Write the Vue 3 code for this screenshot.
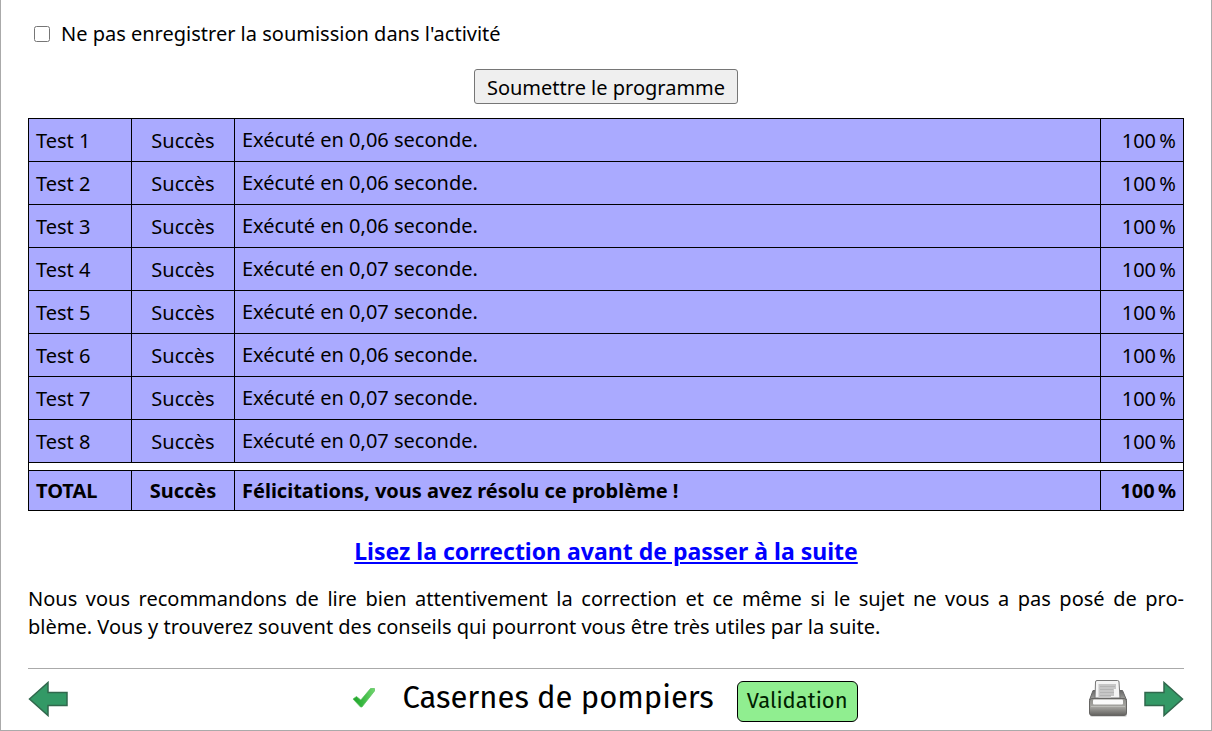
<script setup>
import { ref } from 'vue'

const skipSave = ref(false)
const times = ['0,06', '0,06', '0,06', '0,07', '0,07', '0,06', '0,07', '0,07']
const tests = times.map((time, i) => ({ name: `Test ${i + 1}`, time }))
</script>

<template>
  <main class="page">
    <label class="option">
      <input v-model="skipSave" type="checkbox" />
      <span>Ne pas enregistrer la soumission dans l'activité</span>
    </label>

    <div class="submit">
      <button type="button">Soumettre le programme</button>
    </div>

    <table class="results">
      <colgroup>
        <col class="c-name" />
        <col class="c-state" />
        <col />
        <col class="c-score" />
      </colgroup>
      <tbody>
        <tr v-for="t in tests" :key="t.name">
          <td>{{ t.name }}</td>
          <td class="state">Succès</td>
          <td class="message">Exécuté en {{ t.time }} seconde.</td>
          <td class="score">100&#8239;%</td>
        </tr>
        <tr class="gap"><td colspan="4"></td></tr>
        <tr class="total">
          <td>TOTAL</td>
          <td class="state">Succès</td>
          <td>Félicitations, vous avez résolu ce problème&nbsp;!</td>
          <td class="score">100&#8239;%</td>
        </tr>
      </tbody>
    </table>

    <h2><a href="#correction">Lisez la correction avant de passer à la suite</a></h2>

    <p class="advice" lang="fr">
      <span class="full-line">Nous vous recommandons de lire bien attentivement la correction et ce même si le sujet ne vous a pas posé de pro-</span>
      <span>blème. Vous y trouverez souvent des conseils qui pourront vous être très utiles par la suite.</span>
    </p>

    <footer>
      <a href="#precedent" aria-label="Précédent">
        <svg width="40" height="36" viewBox="0 0 40 36">
          <path d="M1.500 18 20 1.500V11.500H39V24.500H20V34.500Z" fill="#339966" stroke="#31684d" stroke-width="1.500" />
        </svg>
      </a>
      <div class="title">
        <svg class="check" width="24" height="22" viewBox="0 0 24 22">
          <defs>
            <linearGradient id="tick" x1="0" y1="0" x2="1" y2="0">
              <stop offset="0" stop-color="#20a42c" />
              <stop offset=".4" stop-color="#35b63e" />
              <stop offset="1" stop-color="#72d66f" />
            </linearGradient>
          </defs>
          <path d="M1 12 4.500 9.500 8.800 13 18.500 1.500 22.500 1.500 22.500 4 10 20H8.500Z" fill="url(#tick)" stroke="#55be57" stroke-width=".7" stroke-linejoin="round" />
        </svg>
        <h1>Casernes de pompiers</h1>
        <span class="badge">Validation</span>
      </div>
      <div class="tools">
        <a href="#imprimer" aria-label="Imprimer">
          <svg width="40" height="40" viewBox="0 0 40 40">
            <defs>
              <linearGradient id="body" x1="0" y1="0" x2="0" y2="1">
                <stop offset="0" stop-color="#91918d" />
                <stop offset=".5" stop-color="#a5a4a0" />
                <stop offset="1" stop-color="#62615e" />
              </linearGradient>
              <linearGradient id="lid" x1="0" y1="0" x2="0" y2="1">
                <stop offset="0" stop-color="#666" />
                <stop offset="1" stop-color="#a5a5a1" />
              </linearGradient>
            </defs>
            <rect x="2" y="34" width="37" height="4" rx="2" fill="#d8d8d8" />
            <path d="M1.500 21 5 11.500H34.500L38.500 21Z" fill="url(#lid)" stroke="#666" />
            <path d="M7.500 3Q7.500 1.500 9 1.500H29.500Q31 1.500 31 3L32 19H7Z" fill="#f4f4f4" stroke="#777" />
            <path d="M10.500 5H28V10H26V17H23V19H10.500Z" fill="#c6c6c6" />
            <path d="M12 7.500H27M12 10.500H25M12 13.500H26M12 16.500H23" stroke="#b4b4b4" />
            <rect x="1.500" y="19.500" width="37" height="17" rx="2.500" fill="url(#body)" stroke="#666563" />
            <rect x="5" y="20.500" width="30" height="5" rx="1" fill="#fafafa" />
            <path d="M3 27.500H37" stroke="#bcbcb8" />
          </svg>
        </a>
        <a href="#suivant" aria-label="Suivant">
          <svg width="40" height="36" viewBox="0 0 40 36">
            <path d="M38.500 18 20 1.500V11.500H1V24.500H20V34.500Z" fill="#339966" stroke="#31684d" stroke-width="1.500" />
          </svg>
        </a>
      </div>
    </footer>
  </main>
</template>

<style>
body {
  background: #fff;
}
</style>

<style scoped>
.page {
  border: 1px solid #aaa;
  border-top: 0;
  padding: 20px 27px 6px;
  font: 20px/28px "Noto Sans", sans-serif;
  color: #000;
}
.option {
  display: flex;
  align-items: center;
  gap: 11px;
  padding-left: 6px;
}
.option input {
  width: 16px;
  height: 16px;
  margin: 0;
}
.submit {
  display: flex;
  justify-content: center;
  margin: 21px 0 14px;
}
button {
  height: 35px;
  padding: 2px 12px 0;
  border: 1px solid #767676;
  border-radius: 3px;
  background: #efefef;
  color: #000;
  font: inherit;
}
.results {
  width: 100%;
  table-layout: fixed;
  border-collapse: collapse;
}
.c-name,
.c-state {
  width: 103px;
}
.c-score {
  width: 83px;
}
td {
  height: 40px;
  padding: 2px 7px 0;
  border: 1px solid #000;
  background: #aaf;
}
.state {
  text-align: center;
}
.message {
  height: 42px;
  padding: 0 7px;
}
.score {
  text-align: right;
}
.gap td {
  height: 7px;
  padding: 0;
  background: #fff;
}
.total td {
  height: 39px;
  padding: 0 7px;
  font-weight: bold;
}
h2 {
  margin: 23px 0 0;
  font-size: 23px;
  line-height: 34px;
  text-align: center;
}
h2 a {
  color: #00f;
}
.advice {
  margin: 17px 0 27px;
}
.full-line {
  display: block;
  text-align: justify;
  text-align-last: justify;
}
footer {
  display: flex;
  align-items: center;
  justify-content: space-between;
  border-top: 1px solid #aaa;
  padding-top: 4px;
  font-family: "Fira Sans", "Noto Sans", sans-serif;
}
footer svg {
  display: block;
}
.title,
.tools {
  display: flex;
  align-items: center;
}
.title {
  padding: 0 0 2px 54px;
}
.check {
  margin-right: 26px;
}
h1 {
  margin: 0 23px 0 0;
  font-size: 31px;
  font-weight: 400;
  line-height: 40px;
}
.badge {
  margin-top: 8px;
  padding: 5px 9px 6px;
  border: 1px solid #000;
  border-radius: 6px;
  background: #90ee90;
  color: #020;
  font-size: 22px;
}
.tools {
  gap: 16px;
}
</style>
